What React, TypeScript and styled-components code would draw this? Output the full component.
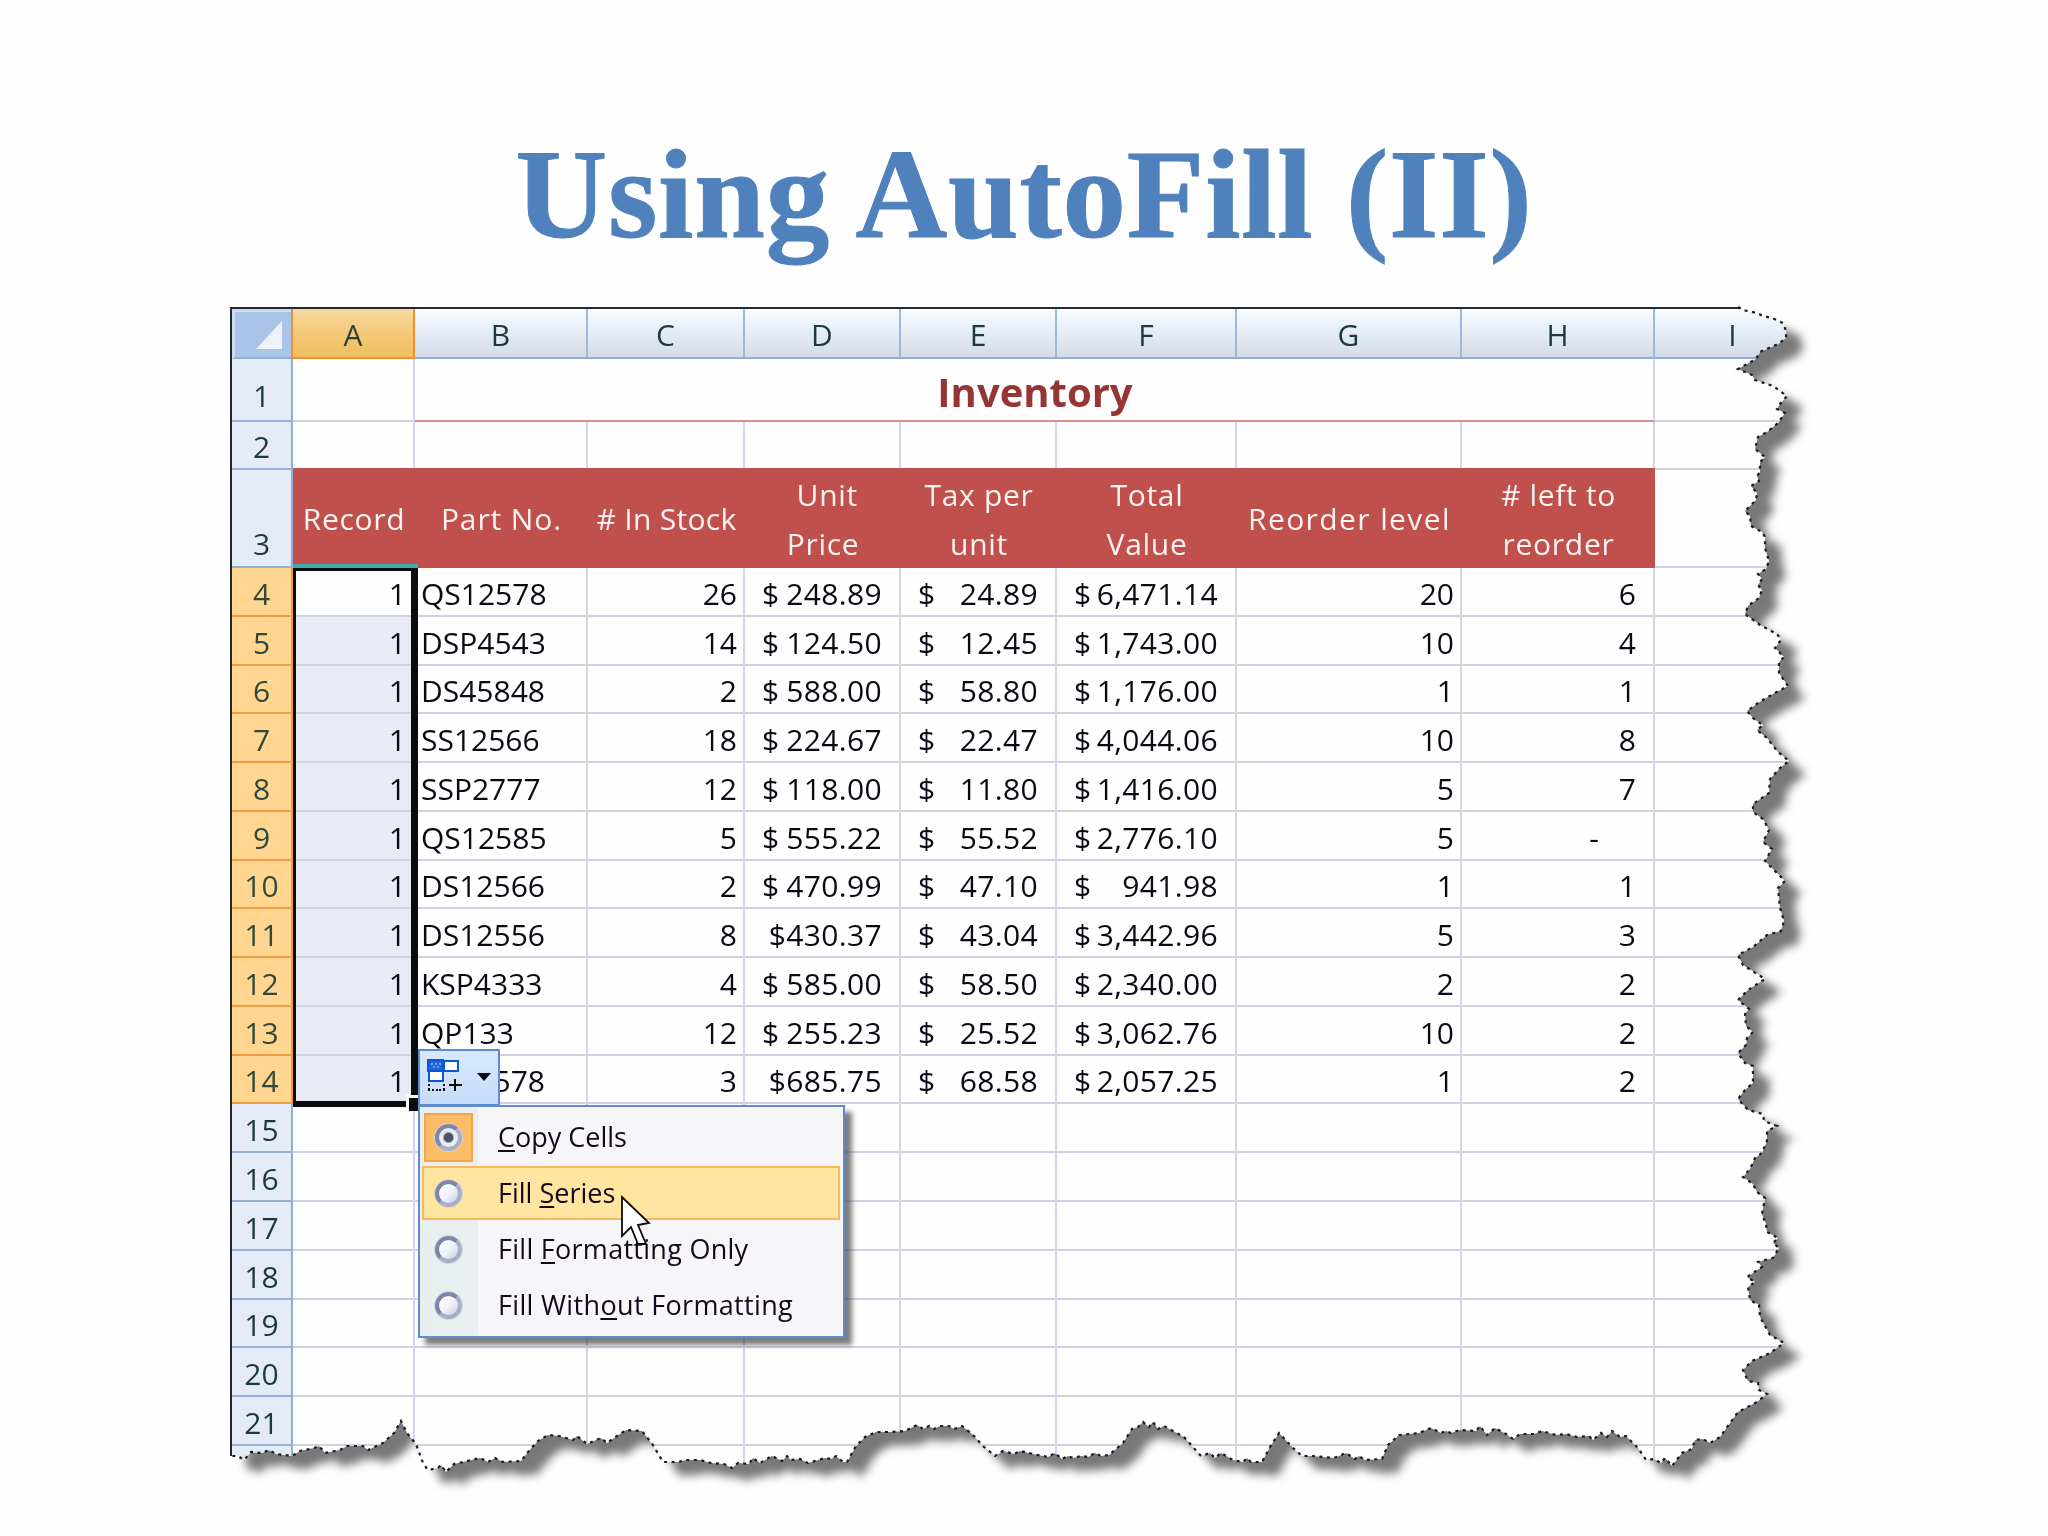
import React from 'react';
import styled, { createGlobalStyle, css } from 'styled-components';

const GlobalStyle = createGlobalStyle`
  *, *::before, *::after { box-sizing: border-box; }
  html, body { margin: 0; padding: 0; background: #fefefe; }
`;

const SHEET_FONT = '"Open Sans", "Noto Sans", sans-serif';

/* Sheet origin inside the slide */
const ORIGIN_X = 230;
const ORIGIN_Y = 307;

/* Outline of the torn paper, clockwise, in slide coordinates */
const RIGHT_TEAR: number[][] = [
  [1738, 307], [1743, 310], [1757, 313], [1763, 316], [1772, 318], [1783, 323], [1786, 331], [1786, 338],
  [1778, 344], [1760, 352], [1756, 359], [1738, 369], [1752, 375], [1755, 380], [1773, 386], [1787, 396],
  [1780, 404], [1777, 409], [1785, 413], [1778, 423], [1767, 432], [1758, 437], [1755, 449], [1765, 457],
  [1760, 462], [1760, 472], [1757, 476], [1759, 481], [1751, 486], [1757, 493], [1756, 500], [1745, 511],
  [1750, 516], [1751, 526], [1762, 532], [1765, 537], [1765, 548], [1769, 561], [1766, 569], [1758, 574],
  [1762, 579], [1758, 585], [1762, 590], [1759, 598], [1748, 606], [1745, 614], [1760, 625], [1777, 634],
  [1781, 640], [1775, 648], [1784, 657], [1779, 662], [1779, 673], [1788, 686], [1773, 694], [1758, 703],
  [1747, 711], [1754, 719], [1763, 725], [1757, 730], [1767, 738], [1778, 752], [1789, 761], [1780, 768],
  [1770, 779], [1769, 793], [1753, 804], [1753, 812], [1763, 819], [1769, 830], [1763, 842], [1772, 849],
  [1765, 861], [1785, 881], [1778, 888], [1780, 908], [1784, 921], [1781, 931], [1767, 935], [1753, 947],
  [1738, 955], [1743, 965], [1754, 972], [1765, 979], [1748, 990], [1738, 1000], [1749, 1009], [1745, 1014],
  [1746, 1026], [1753, 1032], [1747, 1038], [1746, 1045], [1738, 1053], [1745, 1063], [1753, 1066],
  [1753, 1083], [1745, 1090], [1738, 1099], [1748, 1110], [1763, 1114], [1764, 1121], [1777, 1126],
  [1767, 1131], [1767, 1141], [1762, 1153], [1755, 1158], [1750, 1169], [1743, 1177], [1753, 1184],
  [1757, 1192], [1765, 1198], [1762, 1214], [1766, 1224], [1767, 1232], [1778, 1238], [1773, 1243],
  [1779, 1248], [1773, 1258], [1758, 1262], [1762, 1267], [1747, 1277], [1755, 1282], [1748, 1287],
  [1750, 1300], [1759, 1305], [1760, 1317], [1770, 1335], [1784, 1343], [1770, 1353], [1752, 1361],
  [1743, 1370], [1748, 1381], [1758, 1383], [1759, 1390], [1767, 1394], [1757, 1402], [1738, 1412],
  [1720, 1437], [1710, 1443], [1703, 1439], [1695, 1440], [1692, 1449], [1682, 1453], [1672, 1466],
];

const BOTTOM_TEAR: number[][] = [
  [1665, 1458], [1661, 1463], [1654, 1459], [1646, 1460], [1638, 1448], [1626, 1436], [1620, 1437],
  [1612, 1431], [1607, 1437], [1601, 1433], [1593, 1440], [1589, 1436], [1577, 1437], [1566, 1434],
  [1556, 1435], [1542, 1431], [1534, 1434], [1520, 1434], [1513, 1439], [1506, 1434], [1495, 1428],
  [1487, 1435], [1480, 1426], [1476, 1431], [1460, 1430], [1451, 1433], [1446, 1431], [1441, 1433],
  [1431, 1428], [1419, 1433], [1399, 1435], [1388, 1445], [1382, 1459], [1365, 1460], [1359, 1456],
  [1355, 1459], [1346, 1453], [1334, 1458], [1312, 1456], [1302, 1456], [1293, 1448], [1279, 1433],
  [1270, 1447], [1262, 1462], [1251, 1462], [1247, 1458], [1243, 1462], [1233, 1460], [1221, 1453],
  [1215, 1458], [1210, 1453], [1201, 1456], [1184, 1437], [1164, 1426], [1158, 1429], [1153, 1422],
  [1149, 1427], [1143, 1422], [1138, 1427], [1132, 1429], [1123, 1443], [1109, 1455], [1101, 1456],
  [1095, 1453], [1088, 1457], [1081, 1456], [1073, 1458], [1068, 1456], [1062, 1459], [1055, 1453],
  [1048, 1457], [1033, 1454], [1020, 1451], [1014, 1454], [1003, 1451], [995, 1456], [983, 1446],
  [972, 1434], [962, 1426], [954, 1429], [949, 1426], [940, 1426], [934, 1429], [929, 1426], [923, 1429],
  [917, 1425], [905, 1431], [890, 1432], [876, 1432], [865, 1437], [856, 1446], [847, 1462], [843, 1462],
  [836, 1456], [831, 1459], [825, 1458], [808, 1463], [800, 1459], [791, 1460], [787, 1456], [782, 1461],
  [772, 1456], [760, 1463], [753, 1458], [749, 1464], [738, 1463], [732, 1468], [724, 1464], [711, 1463],
  [700, 1460], [686, 1460], [678, 1462], [663, 1462], [653, 1445], [642, 1431], [626, 1430], [617, 1436],
  [607, 1443], [601, 1438], [587, 1444], [577, 1436], [573, 1440], [559, 1436], [548, 1435], [538, 1441],
  [528, 1452], [521, 1461], [503, 1462], [495, 1458], [488, 1462], [480, 1458], [463, 1462], [454, 1464],
  [446, 1472], [441, 1465], [438, 1468], [428, 1470], [423, 1463], [416, 1444], [407, 1433], [401, 1421],
  [394, 1433], [383, 1443], [368, 1450], [363, 1446], [347, 1446], [340, 1450], [325, 1453], [319, 1446],
  [314, 1448], [300, 1451], [292, 1456], [276, 1454], [269, 1450], [262, 1453], [251, 1452], [244, 1460],
  [238, 1456], [230, 1456],
];

const TEAR = [...RIGHT_TEAR, ...BOTTOM_TEAR].map(([x, y]) => [x - ORIGIN_X, y - ORIGIN_Y]);
const CLIP = ['0 0', ...TEAR.map(([x, y]) => `${x}px ${y}px`)].join(', ');
const TEAR_POINTS = TEAR.map((p) => p.join(',')).join(' ');

const COLUMNS = '61px 122px 173px 157px 156px 156px 180px 225px 193px 157px';

/* ---------- slide ---------- */

const Slide = styled.main`
  width: 2048px;
  height: 1536px;
  overflow: hidden;
  background: #fefefe;
`;

const Title = styled.h1`
  margin: 0;
  height: ${ORIGIN_Y}px;
  padding-top: 121px;
  text-align: center;
  font: bold 127px/146px "Liberation Serif", "Times New Roman", serif;
  letter-spacing: 0.8px;
  -webkit-text-stroke: 1px #4f81bd;
  color: #4f81bd;
`;

const Paper = styled.section`
  position: relative;
  width: 1570px;
  height: 1175px;
  margin-left: ${ORIGIN_X}px;
  filter: drop-shadow(16px 13px 5px rgba(0, 0, 0, 0.53));
`;

const Sheet = styled.div`
  position: relative;
  height: 100%;
  border-top: 2px solid #25292c;
  border-left: 2px solid #25292c;
  background: #fefefe;
  clip-path: polygon(${CLIP});
  font: 30px/45px ${SHEET_FONT};
  color: #0a0a12;
`;

const TearLine = styled.svg`
  position: absolute;
  left: 0;
  top: 0;
  overflow: visible;
`;

/* ---------- grid ---------- */

const Row = styled.div<{ $height: number }>`
  display: grid;
  grid-template-columns: ${COLUMNS};
  grid-template-rows: ${(p) => p.$height}px;
  height: ${(p) => p.$height}px;
`;

const Corner = styled.div`
  border: 3px solid #c9dcf4;
  border-right: 2px solid #8fb0d8;
  border-bottom: 2px solid #8fb0d8;
  background: #a9c4e8;
  display: flex;
  align-items: flex-end;
  justify-content: flex-end;
  padding: 0 9px 8px 0;
`;

const ColumnHead = styled.div<{ $active?: boolean }>`
  display: flex;
  align-items: flex-end;
  justify-content: center;
  border-right: 2px solid #9cb9da;
  border-bottom: 2px solid #93aed6;
  background: linear-gradient(#f7fcfd, #e4ecf5 50%, #d3dbe8);
  color: #1c3a3e;
  ${(p) =>
    p.$active &&
    css`
      border-color: #f08f33;
      background: linear-gradient(#f8daa0, #f3c878 50%, #efbf60);
      box-shadow: -2px 0 0 #f08f33;
      color: #2c4436;
    `}
`;

const RowHead = styled.div<{ $active?: boolean; $raise?: number }>`
  display: flex;
  align-items: flex-end;
  justify-content: center;
  padding-bottom: ${(p) => p.$raise ?? 0}px;
  line-height: 43px;
  border-right: 2px solid ${(p) => (p.$active ? '#f0973a' : '#8fb0d4')};
  border-bottom: 2px solid ${(p) => (p.$active ? '#ef9d45' : '#93b2d5')};
  background: ${(p) => (p.$active ? '#ffd58f' : '#e4ebf7')};
  color: ${(p) => (p.$active ? '#2f4a3c' : '#1b3a3e')};
`;

const Cell = styled.div<{ $align?: 'start' | 'end' | 'between'; $pl?: number; $pr?: number; $filled?: boolean }>`
  display: flex;
  align-items: flex-end;
  justify-content: ${(p) => (p.$align === 'between' ? 'space-between' : `flex-${p.$align ?? 'start'}`)};
  padding: 0 ${(p) => p.$pr ?? 0}px 0 ${(p) => p.$pl ?? 0}px;
  border-right: 2px solid #d3d5ea;
  border-bottom: 2px solid #d0d2e4;
  background: ${(p) => (p.$filled ? '#e8eaf4' : 'transparent')};
  line-height: 43px;
  white-space: pre;
`;

const MergedTitle = styled.div`
  grid-column: 3 / span 7;
  display: flex;
  align-items: flex-end;
  justify-content: center;
  padding-left: 2px;
  border-right: 2px solid #d3d5ea;
  border-bottom: 2px solid #db8d8b;
  font-size: 40px;
  line-height: 57px;
  font-weight: bold;
  color: #963634;
`;

const Heading = styled.div<{ $tracking?: number }>`
  display: flex;
  align-items: center;
  justify-content: center;
  margin-top: -2px;
  padding-top: 3px;
  background: #c0504d;
  color: #fdf3f0;
  line-height: 48.5px;
  letter-spacing: ${(p) => p.$tracking ?? 0.7}px;
  text-align: center;
  white-space: pre;
`;

/* ---------- selection ---------- */

const SelectionBox = styled.div`
  position: absolute;
  left: 61px;
  top: 259px;
  width: 125px;
  height: 539px;
  border: solid #0c0c0c;
  border-width: 3px 7px 6px 3px;
`;

const SelectionTop = styled.div`
  position: absolute;
  left: 61px;
  top: 255px;
  width: 125px;
  height: 4px;
  background: #3fa9ab;
`;

const FillHandle = styled.div`
  position: absolute;
  left: 174px;
  top: 786px;
  width: 12px;
  height: 16px;
  border-top: 3px solid #fefefe;
  border-left: 3px solid #fefefe;
  background: #0c0c0c;
`;

/* ---------- auto fill options ---------- */

const OptionsButton = styled.div`
  position: absolute;
  left: 186px;
  top: 740px;
  width: 82px;
  height: 57px;
  display: flex;
  align-items: center;
  justify-content: space-between;
  padding: 0 7px 2px 7px;
  border: 2px solid #5c8bd0;
  background: linear-gradient(#d8e7fd, #c6dcfa);
`;

const Menu = styled.div`
  position: absolute;
  left: 186px;
  top: 796px;
  width: 427px;
  height: 233px;
  padding: 3px 3px 2px 2px;
  border: 2px solid #5f8dcb;
  background: linear-gradient(90deg, #e9eeef 58px, #f6f6f8 58px);
  box-shadow: 7px 7px 5px rgba(70, 70, 70, 0.7);
  font-size: 27px;
  line-height: 40px;
  color: #16081c;
`;

const MenuItem = styled.div<{ $hover?: boolean; $tracking?: number }>`
  display: flex;
  align-items: center;
  height: 54px;
  margin-bottom: 2px;
  border: 2px solid ${(p) => (p.$hover ? '#f6b95e' : 'transparent')};
  background: ${(p) => (p.$hover ? '#ffe5a0' : 'transparent')};
  letter-spacing: ${(p) => p.$tracking ?? 0}px;
  white-space: pre;
`;

const RadioSlot = styled.span<{ $checked?: boolean }>`
  display: flex;
  align-items: center;
  justify-content: center;
  width: 49px;
  height: 49px;
  margin-right: 25px;
  border: 2px solid ${(p) => (p.$checked ? '#f4a748' : 'transparent')};
  background: ${(p) => (p.$checked ? '#fdbd68' : 'transparent')};
`;

const Radio = styled.span<{ $checked?: boolean }>`
  width: 27px;
  height: 27px;
  border: 4px solid #8d96b2;
  border-color: #7d87a5 #a7afc6 #a7afc6 #7d87a5;
  border-radius: 50%;
  background: ${(p) =>
    p.$checked
      ? 'radial-gradient(circle, #4b5264 0 4px, #e9ebf6 6px)'
      : 'linear-gradient(135deg, #ffffff, #f2f2fb 50%, #c9cce8)'};
  box-shadow: 0 0 0 1px rgba(205, 211, 228, 0.9);
`;

const Key = styled.span`
  text-decoration: underline;
  text-decoration-thickness: 2px;
  text-underline-offset: 3px;
  text-decoration-skip-ink: none;
`;

const Cursor = styled.svg`
  position: absolute;
  left: 388px;
  top: 886px;
`;

/* ---------- data ---------- */

const LETTERS = ['A', 'B', 'C', 'D', 'E', 'F', 'G', 'H', 'I'];

const HEADINGS: { text: string; tracking?: number }[] = [
  { text: 'Record' },
  { text: 'Part No.', tracking: 0.9 },
  { text: '# In Stock', tracking: 0.3 },
  { text: ' Unit\nPrice' },
  { text: 'Tax per\nunit' },
  { text: 'Total\nValue' },
  { text: 'Reorder level', tracking: 1.4 },
  { text: '# left to\nreorder' },
];

const ITEMS: string[][] = [
  ['QS12578', '26', '248.89', '24.89', '6,471.14', '20', '6'],
  ['DSP4543', '14', '124.50', '12.45', '1,743.00', '10', '4'],
  ['DS45848', '2', '588.00', '58.80', '1,176.00', '1', '1'],
  ['SS12566', '18', '224.67', '22.47', '4,044.06', '10', '8'],
  ['SSP2777', '12', '118.00', '11.80', '1,416.00', '5', '7'],
  ['QS12585', '5', '555.22', '55.52', '2,776.10', '5', '-'],
  ['DS12566', '2', '470.99', '47.10', '941.98', '1', '1'],
  ['DS12556', '8', '$430.37', '43.04', '3,442.96', '5', '3'],
  ['KSP4333', '4', '585.00', '58.50', '2,340.00', '2', '2'],
  ['QP133', '12', '255.23', '25.52', '3,062.76', '10', '2'],
  ['DS12578', '3', '$685.75', '68.58', '2,057.25', '1', '2'],
];

const rowHeight = (i: number) => Math.round((i + 1) * 48.77) - Math.round(i * 48.77);

const Amount = styled.span`
  letter-spacing: 0.35px;
`;

const Money = ({ value, pl, pr }: { value: string; pl: number; pr: number }) =>
  value.startsWith('$') ? (
    <Cell $align="end" $pr={pr}>
      <Amount>{value}</Amount>
    </Cell>
  ) : (
    <Cell $align="between" $pl={pl} $pr={pr}>
      <span>$</span>
      <Amount>{value}</Amount>
    </Cell>
  );

const AutoFillIcon = () => (
  <svg width="36" height="36" viewBox="0 0 36 36" shapeRendering="crispEdges">
    <rect x="1" y="1" width="15" height="12" fill="#1f62da" />
    <path d="M4 4h2v2H4zM8 4h2v2H8zM12 4h2v2h-2zM6 7h2v2H6zM10 7h2v2h-2z" fill="#6fa2f2" />
    <rect x="17" y="2" width="14" height="10" fill="#fff" stroke="#0b57d2" strokeWidth="2" />
    <rect x="2" y="12" width="14" height="10" fill="#fff" stroke="#0b57d2" strokeWidth="2" />
    <path d="M1 1h15v11H1z" fill="none" stroke="#0b57d2" strokeWidth="2" />
    <path d="M2 25v6M17 25v6" stroke="#0a0a0a" strokeWidth="2" strokeDasharray="2 2" />
    <path d="M1 31h17" stroke="#0a0a0a" strokeWidth="2" strokeDasharray="2 1.75" />
    <path d="M22 26h13M28 20v12" stroke="#0a0a0a" strokeWidth="2.6" />
  </svg>
);

export default function App() {
  return (
    <>
      <GlobalStyle />
      <Slide>
        <Title>Using AutoFill (II)</Title>
        <Paper>
          <Sheet>
            <Row $height={50}>
              <Corner>
                <svg width="26" height="28" viewBox="0 0 26 28">
                  <path d="M26 0V28H0Z" fill="#edf3f8" />
                </svg>
              </Corner>
              {LETTERS.map((l) => (
                <ColumnHead key={l} $active={l === 'A'}>{l}</ColumnHead>
              ))}
            </Row>
            <Row $height={63}>
              <RowHead $raise={3}>1</RowHead>
              <Cell />
              <MergedTitle>Inventory</MergedTitle>
              <Cell />
            </Row>
            <Row $height={48}>
              <RowHead>2</RowHead>
              {LETTERS.map((l) => <Cell key={l} />)}
            </Row>
            <Row $height={98}>
              <RowHead $raise={1}>3</RowHead>
              {HEADINGS.map((h) => (
                <Heading key={h.text} $tracking={h.tracking}>{h.text}</Heading>
              ))}
              <Cell />
            </Row>
            {ITEMS.map(([part, stock, price, tax, total, level, left], i) => (
              <Row key={i} $height={rowHeight(i)}>
                <RowHead $active>{i + 4}</RowHead>
                <Cell $align="end" $pr={7} $filled={i > 0}>1</Cell>
                <Cell $pl={6}>{part}</Cell>
                <Cell $align="end" $pr={6}>{stock}</Cell>
                <Money value={price} pl={17} pr={17} />
                <Money value={tax} pl={17} pr={17} />
                <Money value={total} pl={17} pr={17} />
                <Cell $align="end" $pr={6}>{level}</Cell>
                <Cell $align="end" $pr={left === '-' ? 54 : 17}>{left}</Cell>
                <Cell />
              </Row>
            ))}
            {Array.from({ length: 8 }, (_, n) => n + 11).map((i) => (
              <Row key={i} $height={rowHeight(i)}>
                <RowHead>{i < 18 ? i + 4 : ''}</RowHead>
                {LETTERS.map((l) => <Cell key={l} />)}
              </Row>
            ))}
            <SelectionBox />
            <SelectionTop />
            <FillHandle />
            <OptionsButton>
              <AutoFillIcon />
              <svg width="14" height="8" viewBox="0 0 14 8">
                <path d="M0 0H14L7 8Z" fill="#0a0a0a" />
              </svg>
            </OptionsButton>
            <Menu>
              <MenuItem>
                <RadioSlot $checked><Radio $checked /></RadioSlot>
                <span><Key>C</Key>opy Cells</span>
              </MenuItem>
              <MenuItem $hover>
                <RadioSlot><Radio /></RadioSlot>
                <span>Fill <Key>S</Key>eries</span>
              </MenuItem>
              <MenuItem $tracking={0.28}>
                <RadioSlot><Radio /></RadioSlot>
                <span>Fill <Key>F</Key>ormatting Only</span>
              </MenuItem>
              <MenuItem $tracking={0.34}>
                <RadioSlot><Radio /></RadioSlot>
                <span>Fill With<Key>o</Key>ut Formatting</span>
              </MenuItem>
            </Menu>
            <Cursor width="32" height="52" viewBox="-1 -1 32 52">
              <path d="M1 1V40L10 31L17 48H25L17 29L28 27Z" fill="#fff" stroke="#0a0a0a" strokeWidth="1.8" />
            </Cursor>
          </Sheet>
          <TearLine width="1570" height="1175">
            <polyline points={TEAR_POINTS} fill="none" stroke="#1c1c1c" strokeWidth="2.2" strokeDasharray="3 4.5" />
          </TearLine>
        </Paper>
      </Slide>
    </>
  );
}
